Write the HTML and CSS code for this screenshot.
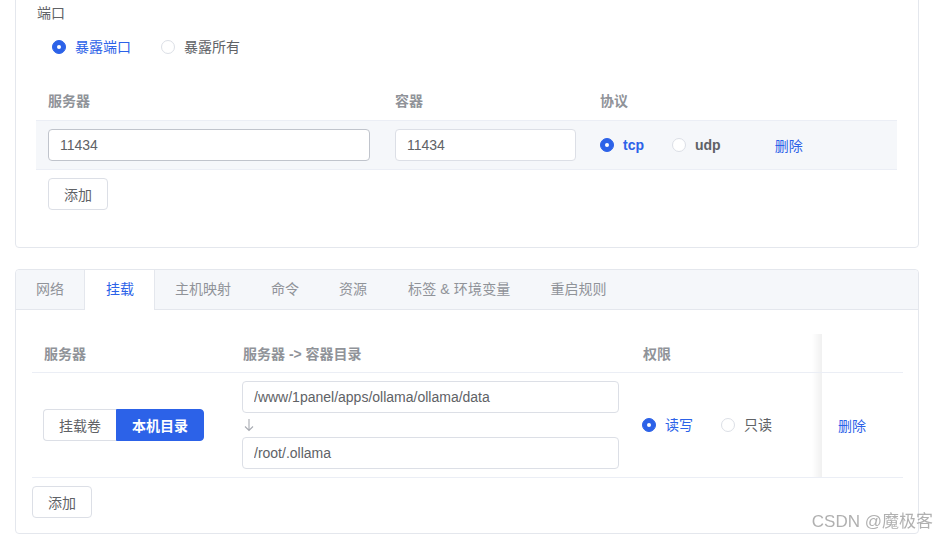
FILE: index.html
```html
<!DOCTYPE html>
<html lang="zh-CN">
<head>
  <meta charset="UTF-8" />
  <title>容器编辑</title>
  <link rel="stylesheet" href="styles.css">
</head>
<body>

  <div class="page">

    <div class="card port-card">
      <div class="form-label">端口</div>
      <div class="radio-group expose">
        <label class="radio checked"><span class="dot"></span>暴露端口</label>
        <label class="radio"><span class="dot"></span>暴露所有</label>
      </div>

      <table class="grid port-table">
        <colgroup>
          <col style="width: 347px">
          <col style="width: 205px">
          <col>
        </colgroup>
        <thead>
          <tr><th>服务器</th><th>容器</th><th>协议</th></tr>
        </thead>
        <tbody>
          <tr class="shaded">
            <td><input class="field active" type="text" value="11434"></td>
            <td><input class="field" type="text" value="11434"></td>
            <td>
              <div class="proto">
                <label class="radio checked latin"><span class="dot"></span>tcp</label>
                <label class="radio latin"><span class="dot"></span>udp</label>
                <a class="link" href="#">删除</a>
              </div>
            </td>
          </tr>
        </tbody>
      </table>

      <button class="btn">添加</button>
    </div>

    <div class="card tabs-card">
      <div class="tab-bar">
        <div class="tab">网络</div>
        <div class="tab current">挂载</div>
        <div class="tab">主机映射</div>
        <div class="tab">命令</div>
        <div class="tab">资源</div>
        <div class="tab wide">标签 &amp; 环境变量</div>
        <div class="tab">重启规则</div>
      </div>

      <div class="tab-body">
        <table class="grid mount-table">
          <colgroup>
            <col style="width: 199px">
            <col style="width: 400px">
            <col style="width: 191px">
            <col>
          </colgroup>
          <thead>
            <tr><th>服务器</th><th>服务器 -&gt; 容器目录</th><th>权限</th><th class="fixed"></th></tr>
          </thead>
          <tbody>
            <tr>
              <td>
                <div class="btn-group">
                  <button class="seg">挂载卷</button>
                  <button class="seg on">本机目录</button>
                </div>
              </td>
              <td>
                <input class="field" type="text" value="/www/1panel/apps/ollama/ollama/data">
                <div class="arrow">
                  <svg width="10" height="14" viewBox="0 0 10 14">
                    <path d="M5 1 V12.5 M1 8.5 L5 12.5 L9 8.5" fill="none" stroke="#a8abb2" stroke-width="1.1"/>
                  </svg>
                </div>
                <input class="field" type="text" value="/root/.ollama">
              </td>
              <td>
                <div class="radio-group">
                  <label class="radio checked"><span class="dot"></span>读写</label>
                  <label class="radio"><span class="dot"></span>只读</label>
                </div>
              </td>
              <td class="fixed"><a class="link" href="#">删除</a></td>
            </tr>
          </tbody>
        </table>

        <button class="btn">添加</button>
      </div>
    </div>

  </div>

  <div class="watermark">CSDN @魔极客</div>

</body>
</html>
```

FILE: styles.css
```css
* { box-sizing: border-box; }
body {
  margin: 0;
  background: #ffffff;
  font-family: 'Liberation Sans', 'Noto Sans CJK SC', sans-serif;
  font-size: 14px;
  color: #606266;
  overflow: hidden;
}

.page {
  padding: 0 18px 0 15px;
}

.card {
  border: 1px solid #e4e7ed;
  border-radius: 4px;
  background: #fff;
}

.port-card {
  margin-top: -10px;
  padding: 14px 21px 37px 20px;
}

.form-label {
  line-height: 16px;
  margin-left: 1px;
}

.radio-group {
  display: flex;
  align-items: center;
}

.expose {
  height: 32px;
  margin: 10px 0 17px 16px;
}

.radio {
  display: inline-flex;
  align-items: center;
  flex-shrink: 0;
  white-space: nowrap;
  margin-right: 30px;
  cursor: pointer;
  line-height: 20px;
}

.radio .dot {
  flex-shrink: 0;
  width: 14px;
  height: 14px;
  border-radius: 50%;
  border: 1px solid #dcdfe6;
  background: #fff;
  margin-right: 9px;
  position: relative;
}

.radio.checked { color: #2c62e8; }
.radio.checked .dot {
  border-color: #2c62e8;
  background: #2c62e8;
}
.radio.checked .dot::after {
  content: "";
  position: absolute;
  left: 4px;
  top: 4px;
  width: 4px;
  height: 4px;
  border-radius: 50%;
  background: #fff;
}

.latin { font-weight: bold; font-size: 14px; }
.latin.checked { color: #2c62e8; }
.radio.latin:not(.checked) { color: #606266; }

.grid {
  width: 100%;
  border-collapse: collapse;
  table-layout: fixed;
}

.grid th {
  text-align: left;
  color: #909399;
  font-weight: bold;
  height: 40px;
  padding: 0 12px;
  border-bottom: 1px solid #ebeef5;
}

.grid td {
  padding: 8px 12px;
  border-bottom: 1px solid #ebeef5;
  vertical-align: middle;
}

.shaded td { background: #f5f7fa; }

.field {
  display: block;
  width: 100%;
  height: 32px;
  padding: 0 11px;
  border: 1px solid #dcdfe6;
  border-radius: 4px;
  font: inherit;
  color: #606266;
  background: #fff;
  outline: none;
}

.field.active { border-color: #c0c4cc; }

.port-table td:nth-child(1) { padding-right: 13px; }

.proto {
  display: flex;
  align-items: center;
}
.proto .radio { margin-right: 28px; }
.proto .link { margin-left: 26px; }

.link {
  color: #2c62e8;
  text-decoration: none;
  white-space: nowrap;
}

.btn {
  display: block;
  height: 32px;
  padding: 0 15px;
  margin-top: 8px;
  border: 1px solid #dcdfe6;
  border-radius: 4px;
  background: #fff;
  font: inherit;
  color: #606266;
  cursor: pointer;
}

.port-card .btn { margin-left: 12px; width: 60px; }

.tabs-card {
  margin-top: 21px;
  height: 265px;
}

.tab-bar {
  display: flex;
  height: 40px;
  background: #f5f7fa;
  border-bottom: 1px solid #e4e7ed;
  border-radius: 4px 4px 0 0;
}

.tab {
  padding: 0 20px;
  line-height: 39px;
  color: #909399;
  white-space: nowrap;
}

.tab.current {
  background: #fff;
  color: #2c62e8;
  border-left: 1px solid #e4e7ed;
  border-right: 1px solid #e4e7ed;
  height: 40px;
  margin-bottom: -1px;
  padding: 0 20px 0 21px;
}

.tab.wide { padding: 0 20px 0 21px; letter-spacing: 0.15px; }

.tab-body {
  padding: 24px 15px 15px 16px;
}

.mount-table th { height: 39px; }
.mount-table td { padding: 8px 12px 8px 11px; }

.arrow {
  height: 24px;
  padding: 5px 0 0 2px;
}
.arrow svg { display: block; }

.btn-group { display: flex; }

.seg {
  height: 32px;
  padding: 0 15px;
  border: 1px solid #dcdfe6;
  background: #fff;
  font: inherit;
  color: #606266;
  cursor: pointer;
  white-space: nowrap;
}
.seg:first-child { border-radius: 4px 0 0 4px; border-right: none; }
.seg:last-child { border-radius: 0 4px 4px 0; }
.seg.on {
  background: #2c62e8;
  border-color: #2c62e8;
  color: #fff;
  font-weight: bold;
}

.mount-table .radio { margin-right: 28px; }

.mount-table .fixed {
  position: relative;
  padding-left: 16px;
}
.mount-table .fixed::before {
  content: "";
  position: absolute;
  left: -10px;
  top: 0;
  bottom: 0;
  width: 10px;
  background: linear-gradient(to right, rgba(0,0,0,0), rgba(0,0,0,0.06));
}

.tabs-card .btn { margin-top: 8px; }

.watermark {
  position: fixed;
  right: 4px;
  bottom: 4px;
  font-family: 'Liberation Sans', 'Noto Sans CJK SC', sans-serif;
  font-size: 17px;
  color: rgba(150, 150, 150, 0.75);
}
```
